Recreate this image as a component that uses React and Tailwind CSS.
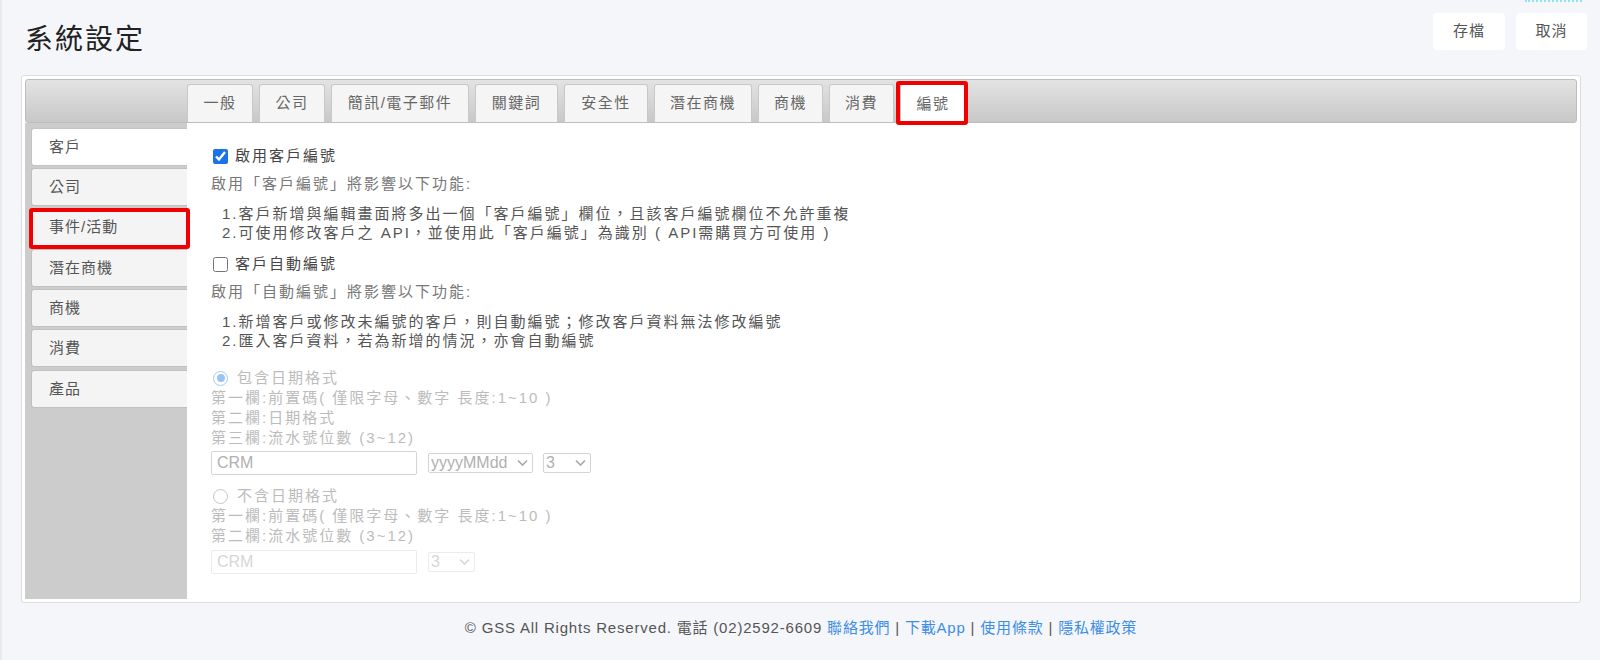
import React from 'react';

const tabs = [
  { label: '一般', w: 'w-[66px]' },
  { label: '公司', w: 'w-[66px]' },
  { label: '簡訊/電子郵件', w: 'w-[138px]' },
  { label: '關鍵詞', w: 'w-[83px]' },
  { label: '安全性', w: 'w-[84px]' },
  { label: '潛在商機', w: 'w-[98px]' },
  { label: '商機', w: 'w-[65px]' },
  { label: '消費', w: 'w-[65px]' },
  { label: '編號', w: 'w-[66px]', active: true },
];

const sideItems = ['客戶', '公司', '事件/活動', '潛在商機', '商機', '消費', '產品'];

function Chevron({ light }) {
  return (
    <svg
      className="pointer-events-none absolute right-[5px] top-1/2 -translate-y-1/2"
      width="11"
      height="7"
      viewBox="0 0 11 7"
      fill="none"
    >
      <path d="M1 1l4.5 4.5L10 1" stroke={light ? '#d8d8d8' : '#a8a8a8'} strokeWidth="1.6" />
    </svg>
  );
}

function FakeSelect({ value, w, light }) {
  return (
    <div className={`relative h-[20px] ${w}`}>
      <select
        disabled={light}
        defaultValue={value}
        className={`h-full w-full appearance-none rounded-[2px] border bg-white pl-[2px] text-[16px] leading-[18px] outline-none ${
          light ? 'border-[#ececec] text-[#d6d6d6]' : 'border-[#d4d4d4] text-[#b0b0b0]'
        }`}
      >
        <option>{value}</option>
      </select>
      <Chevron light={light} />
    </div>
  );
}

// disabled radio, drawn so the light-blue checked state matches
function Radio({ checked }) {
  return checked ? (
    <span className="ml-[2px] flex h-[15px] w-[15px] items-center justify-center rounded-full border-[1.5px] border-[#a3c9f5] bg-white">
      <span className="h-[8px] w-[8px] rounded-full bg-[#9cc4f3]" />
    </span>
  ) : (
    <span className="ml-[2px] h-[15px] w-[15px] rounded-full border border-[#c6c6c6] bg-white" />
  );
}

function Tab({ label, w, active }) {
  if (active) {
    return (
      <div className={`relative -mb-[1px] flex h-[39px] ${w} items-center justify-center rounded-t-[3px] border border-b-0 border-[#c4c4c4] bg-white text-[15px] tracking-[1.5px] text-[#666]`}>
        {label}
        <span className="pointer-events-none absolute -left-[5px] -right-[3px] -top-[4px] -bottom-[2px] rounded-[3px] border-[4px] border-[#f00000]" />
      </div>
    );
  }
  return (
    <div className={`flex h-[38px] ${w} items-center justify-center rounded-t-[3px] border border-b-0 border-[#c8c8c8] bg-[#f5f5f5] text-[15px] tracking-[1.5px] text-[#666]`}>
      {label}
    </div>
  );
}

function SideItem({ label, index }) {
  const active = index === 0;
  const marked = index === 2;
  return (
    <div
      className={`relative flex h-[38px] items-center rounded-l-[3px] border border-r-0 pl-[17px] text-[15px] tracking-[1px] text-[#555] ${
        active ? 'border-[#c4c4c4] bg-white' : 'border-[#c0c0c0] bg-[#f4f4f4]'
      }`}
    >
      {label}
      {marked && (
        <span className="pointer-events-none absolute -left-[3px] -right-[3px] -top-[2px] -bottom-[3px] rounded-[3px] border-[4px] border-[#f00000]" />
      )}
    </div>
  );
}

export default function App() {
  return (
    <div className="relative h-[660px] w-full overflow-hidden border-l-[2px] border-[#e8eaef] bg-[#f5f6fa] font-['Liberation_Sans','Noto_Sans_CJK_TC',sans-serif]">
      <div className="absolute right-[18px] top-0 w-[57px] border-t-[2px] border-dotted border-[#8fe3ee]" />

      {/* header */}
      <div className="flex h-[75px] items-start justify-between pl-[23px] pr-[13px]">
        <h1 className="mt-[22px] text-[28px] leading-[36px] tracking-[2px] text-[#222]">系統設定</h1>
        <div className="mt-[13px] flex gap-[11px]">
          <button className="h-[37px] w-[72px] rounded-[4px] bg-white text-[15px] tracking-[1px] text-[#555]">存檔</button>
          <button className="h-[37px] w-[71px] rounded-[4px] bg-white text-[15px] tracking-[1px] text-[#555]">取消</button>
        </div>
      </div>

      {/* card */}
      <div className="ml-[19px] flex h-[528px] w-[1560px] flex-col rounded-[3px] border border-[#dcdcdc] bg-white p-[3px]">
        <div className="flex h-[44px] shrink-0 items-end gap-[6px] rounded-[3px] border border-[#bdbdbd] bg-linear-to-b from-[#e3e3e3] to-[#c8c8c8] pl-[161px]">
          {tabs.map((t) => (
            <Tab key={t.label} {...t} />
          ))}
        </div>

        <div className="flex flex-1">
          <div className="flex w-[162px] flex-col gap-[2.3px] bg-[#cccccc] pl-[6px] pt-[5px]">
            {sideItems.map((s, i) => (
              <SideItem key={s} label={s} index={i} />
            ))}
          </div>

          <div className="flex-1 pl-[24px] pt-[23px] text-[15px] tracking-[2px]">
            <label className="flex h-[20px] items-center gap-[7px] text-[#444]">
              <input type="checkbox" defaultChecked className="ml-[2px] h-[15px] w-[15px] accent-[#1a73e8]" />
              啟用客戶編號
            </label>
            <div className="mt-[8px] h-[20px] leading-[20px] text-[#777]">啟用「客戶編號」將影響以下功能:</div>
            <div className="mt-[10px] pl-[11px] leading-[19px] text-[#555]">
              <div>1.客戶新增與編輯畫面將多出一個「客戶編號」欄位，且該客戶編號欄位不允許重複</div>
              <div>2.可使用修改客戶之 API，並使用此「客戶編號」為識別 ( API需購買方可使用 )</div>
            </div>

            <label className="mt-[12px] flex h-[20px] items-center gap-[7px] text-[#444]">
              <input type="checkbox" className="ml-[2px] h-[15px] w-[15px] accent-[#1a73e8]" />
              客戶自動編號
            </label>
            <div className="mt-[8px] h-[20px] leading-[20px] text-[#777]">啟用「自動編號」將影響以下功能:</div>
            <div className="mt-[10px] pl-[11px] leading-[19px] text-[#555]">
              <div>1.新增客戶或修改未編號的客戶，則自動編號；修改客戶資料無法修改編號</div>
              <div>2.匯入客戶資料，若為新增的情況，亦會自動編號</div>
            </div>

            <div className="mt-[18px] leading-[20px] text-[#bcbcbc]">
              <div className="flex h-[20px] items-center gap-[9px]">
                <Radio checked />
                包含日期格式
              </div>
              <div>第一欄:前置碼( 僅限字母、數字 長度:1~10 )</div>
              <div>第二欄:日期格式</div>
              <div>第三欄:流水號位數 (3~12)</div>
              <div className="mt-[3px] flex h-[24px] items-center tracking-normal">
                <input
                  defaultValue="CRM"
                  className="h-[24px] w-[206px] rounded-[2px] border border-[#d4d4d4] px-[5px] text-[16px] text-[#b0b0b0] outline-none"
                />
                <div className="ml-[11px]">
                  <FakeSelect value="yyyyMMdd" w="w-[105px]" />
                </div>
                <div className="ml-[10px]">
                  <FakeSelect value="3" w="w-[48px]" />
                </div>
              </div>

              <div className="mt-[11px] flex h-[20px] items-center gap-[9px]">
                <Radio />
                不含日期格式
              </div>
              <div>第一欄:前置碼( 僅限字母、數字 長度:1~10 )</div>
              <div>第二欄:流水號位數 (3~12)</div>
              <div className="mt-[4px] flex h-[24px] items-center tracking-normal">
                <input
                  defaultValue="CRM"
                  disabled
                  className="h-[24px] w-[206px] rounded-[2px] border border-[#ececec] bg-white px-[5px] text-[16px] text-[#d6d6d6] outline-none"
                />
                <div className="ml-[11px]">
                  <FakeSelect value="3" w="w-[47px]" light />
                </div>
              </div>
            </div>
          </div>
        </div>
      </div>

      {/* footer */}
      <div className="flex h-[50px] items-center justify-center text-[15px] tracking-[0.8px] text-[#555]">
        <span>© GSS All Rights Reserved. 電話 (02)2592-6609&nbsp;</span>
        <a className="text-[#3b8de6]">聯絡我們</a>
        <span>&nbsp;|&nbsp;</span>
        <a className="text-[#3b8de6]">下載App</a>
        <span>&nbsp;|&nbsp;</span>
        <a className="text-[#3b8de6]">使用條款</a>
        <span>&nbsp;|&nbsp;</span>
        <a className="text-[#3b8de6]">隱私權政策</a>
      </div>
    </div>
  );
}
